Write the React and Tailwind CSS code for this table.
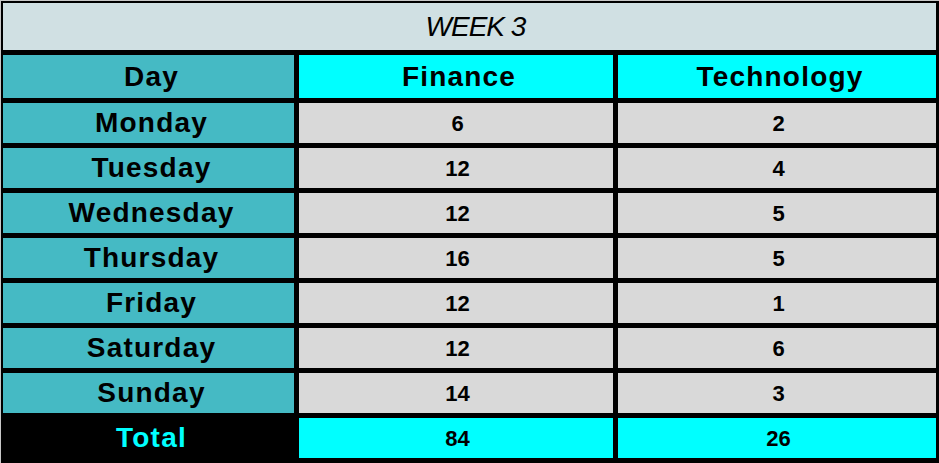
const rows = [
  { day: "Monday", finance: 6, tech: 2 },
  { day: "Tuesday", finance: 12, tech: 4 },
  { day: "Wednesday", finance: 12, tech: 5 },
  { day: "Thursday", finance: 16, tech: 5 },
  { day: "Friday", finance: 12, tech: 1 },
  { day: "Saturday", finance: 12, tech: 6 },
  { day: "Sunday", finance: 14, tech: 3 },
];

const label = "flex items-center justify-center pl-[6px] text-[28px] font-bold tracking-[1.2px] leading-none";
const num = "flex items-center justify-center pl-[3px] pt-[2px] text-[22px] font-bold leading-none";

export default function App() {
  return (
    <div
      className="w-[939px] h-[463px] bg-[#c8c8c8] pl-px pt-px"
      style={{ fontFamily: '"Liberation Sans", Arial, sans-serif' }}
    >
      <div className="w-[938px] h-[462px] bg-black pl-[2px] pt-[2px] pr-[3px] pb-[5px] grid grid-cols-[291px_314px_318px] grid-rows-[47px_43px_repeat(8,40px)] gap-[5px] text-black">
        <div className="col-span-3 bg-[#d0e0e3] flex items-center justify-center pl-3 italic text-[28px] tracking-[-1px] font-normal">
          WEEK 3
        </div>

        <div className={`${label} bg-[#45bac4]`}>Day</div>
        <div className={`${label} bg-[#00ffff]`}>Finance</div>
        <div className={`${label} bg-[#00ffff]`}>Technology</div>

        {rows.map((r) => (
          <div key={r.day} className="contents">
            <div className={`${label} bg-[#45bac4]`}>{r.day}</div>
            <div className={`${num} bg-[#d9d9d9]`}>{r.finance}</div>
            <div className={`${num} bg-[#d9d9d9]`}>{r.tech}</div>
          </div>
        ))}

        <div className={`${label} bg-black text-[#00ffff]`}>Total</div>
        <div className={`${num} bg-[#00ffff]`}>84</div>
        <div className={`${num} bg-[#00ffff]`}>26</div>
      </div>
    </div>
  );
}
